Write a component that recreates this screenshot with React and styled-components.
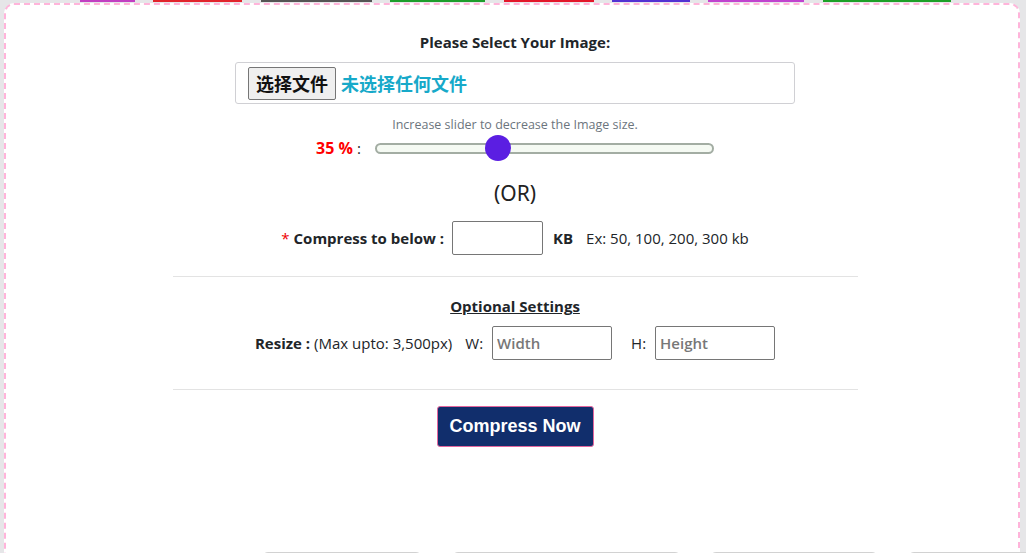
import { createGlobalStyle, styled } from "styled-components";

const GlobalStyle = createGlobalStyle`
  html, body {
    margin: 0;
    padding: 0;
    background: #e6e6e8;
    font-family: "Open Sans", "Noto Sans", Arial, sans-serif;
    color: #212529;
  }
  * { box-sizing: border-box; }
`;

const Page = styled.div`
  padding: 0 4px 0 4px;
  overflow: hidden;
  height: 553px;
`;

const NavStrip = styled.div`
  display: flex;
  gap: 18.4px;
  height: 3px;
  padding-left: 76px;
`;

const NavBar = styled.div`
  width: ${(p) => p.$w}px;
  height: 2px;
  background: ${(p) => p.$c};
`;

const Card = styled.div`
  background: #fff;
  border: 2px dashed #ffb4da;
  border-radius: 10px;
  margin-right: 2px;
  padding: 27px 0 0 6px;
  display: flex;
  flex-direction: column;
  align-items: center;
  min-height: 600px;
`;

const Title = styled.div`
  font-size: 15px;
  font-weight: 700;
  line-height: 20px;
`;

const FileBox = styled.div`
  margin-top: 10px;
  width: 560px;
  height: 42px;
  border: 1px solid #d0d0d4;
  border-radius: 3px;
  display: flex;
  align-items: center;
  padding-left: 12px;
  gap: 5px;
`;

const FileButton = styled.button`
  font-family: "Noto Sans CJK SC", sans-serif;
  font-size: 18px;
  font-weight: 700;
  color: #111;
  background: #efefef;
  border: 1px solid #767676;
  border-radius: 2px;
  height: 33px;
  padding: 0 7px;
  line-height: 1;
`;

const FileName = styled.span`
  font-family: "Noto Sans CJK SC", sans-serif;
  font-size: 18px;
  font-weight: 700;
  color: #17a9c9;
`;

const Hint = styled.div`
  margin-top: 13px;
  font-size: 12.5px;
  line-height: 16px;
  color: #6c757d;
`;

const SliderRow = styled.div`
  display: flex;
  align-items: center;
  gap: 14px;
  height: 28px;
  margin-top: 1px;
`;

const Percent = styled.span`
  font-size: 16px;
  font-weight: 700;
  color: #ff0000;
`;

const Colon = styled.span`
  font-size: 15px;
  margin-left: 4px;
`;

const Range = styled.input`
  -webkit-appearance: none;
  appearance: none;
  width: 339px;
  height: 11px;
  margin: 0;
  background: #f5faf3;
  border: 2px solid #a3ada3;
  border-radius: 6px;
  outline: none;

  &::-webkit-slider-thumb {
    -webkit-appearance: none;
    width: 26px;
    height: 26px;
    border-radius: 50%;
    background: #5b1ee2;
    border: none;
    cursor: pointer;
  }
`;

const Or = styled.div`
  margin-top: 17px;
  font-family: "Noto Sans", sans-serif;
  font-size: 21px;
  line-height: 28px;
  color: #222;
`;

const FieldRow = styled.div`
  display: flex;
  align-items: center;
  margin-top: ${(p) => p.$mt}px;
  font-size: 15px;
`;

const Bold = styled.span`
  font-weight: 700;
  margin-right: ${(p) => p.$mr || 0}px;
  margin-left: ${(p) => p.$ml || 0}px;
`;

const Star = styled.span`
  color: #e00;
  margin-right: 4px;
`;

const Plain = styled.span`
  margin-left: ${(p) => p.$ml || 0}px;
  margin-right: ${(p) => p.$mr || 0}px;
`;

const TextBox = styled.input`
  width: ${(p) => p.$w}px;
  height: 34px;
  border: 1px solid #767676;
  border-radius: 2px;
  padding: 0 4px;
  font-family: "Open Sans", sans-serif;
  font-size: 15px;
  font-weight: 600;
  color: #333;
  &::placeholder {
    color: #777;
  }
`;

const Divider = styled.hr`
  width: 685px;
  border: none;
  border-top: 1px solid #e3e3e3;
  margin: ${(p) => p.$mt}px 0 0;
`;

const SectionHeading = styled.div`
  margin-top: 19px;
  font-size: 15px;
  font-weight: 700;
  line-height: 20px;
  text-decoration: underline;
`;

const SubmitButton = styled.button`
  margin-top: 16px;
  width: 157px;
  height: 41px;
  background: #112e6c;
  border: 1px solid #e4669e;
  border-radius: 3px;
  color: #fff;
  font-family: "Liberation Sans", Arial, sans-serif;
  font-size: 18px;
  font-weight: 700;
`;

const TabStrip = styled.div`
  display: flex;
  gap: 29.7px;
  margin-top: 105px;
  padding-left: 250px;
  align-self: stretch;
`;

const Tab = styled.div`
  width: ${(p) => p.$w}px;
  flex-shrink: 0;
  height: 30px;
  border: 1px solid #d2d2d2;
  border-radius: 6px;
`;

const navBars = [
  { w: 55, c: "#c23fc2" },
  { w: 89, c: "#e2242c" },
  { w: 111, c: "#555555" },
  { w: 95, c: "#1f9d2c" },
  { w: 90, c: "#e3172a" },
  { w: 78, c: "#5432d3" },
  { w: 96, c: "#c043cf" },
  { w: 128, c: "#1fa028" },
];

const tabs = [160, 229, 168, 140];

export default function App() {
  return (
    <>
      <GlobalStyle />
      <Page>
        <NavStrip>
          {navBars.map((b, i) => (
            <NavBar key={i} $w={b.w} $c={b.c} />
          ))}
        </NavStrip>
        <Card>
          <Title>Please Select Your Image:</Title>
          <FileBox>
            <FileButton type="button">选择文件</FileButton>
            <FileName>未选择任何文件</FileName>
          </FileBox>
          <Hint>Increase slider to decrease the Image size.</Hint>
          <SliderRow>
            <span>
              <Percent>35 %</Percent>
              <Colon>:</Colon>
            </span>
            <Range type="range" min="0" max="100" defaultValue="35" />
          </SliderRow>
          <Or>(OR)</Or>
          <FieldRow $mt={14}>
            <Star>*</Star>
            <Bold $mr={8}>Compress to below :</Bold>
            <TextBox $w={91} type="text" />
            <Bold $ml={10} $mr={13}>KB</Bold>
            <Plain>Ex: 50, 100, 200, 300 kb</Plain>
          </FieldRow>
          <Divider $mt={21} />
          <SectionHeading>Optional Settings</SectionHeading>
          <FieldRow $mt={10}>
            <Bold $mr={4}>Resize :</Bold>
            <Plain $mr={13}>(Max upto: 3,500px)</Plain>
            <Plain $mr={9}>W:</Plain>
            <TextBox $w={120} type="text" placeholder="Width" />
            <Plain $ml={19} $mr={9}>H:</Plain>
            <TextBox $w={120} type="text" placeholder="Height" />
          </FieldRow>
          <Divider $mt={29} />
          <SubmitButton type="button">Compress Now</SubmitButton>
          <TabStrip>
            {tabs.map((w, i) => (
              <Tab key={i} $w={w} />
            ))}
          </TabStrip>
        </Card>
      </Page>
    </>
  );
}
